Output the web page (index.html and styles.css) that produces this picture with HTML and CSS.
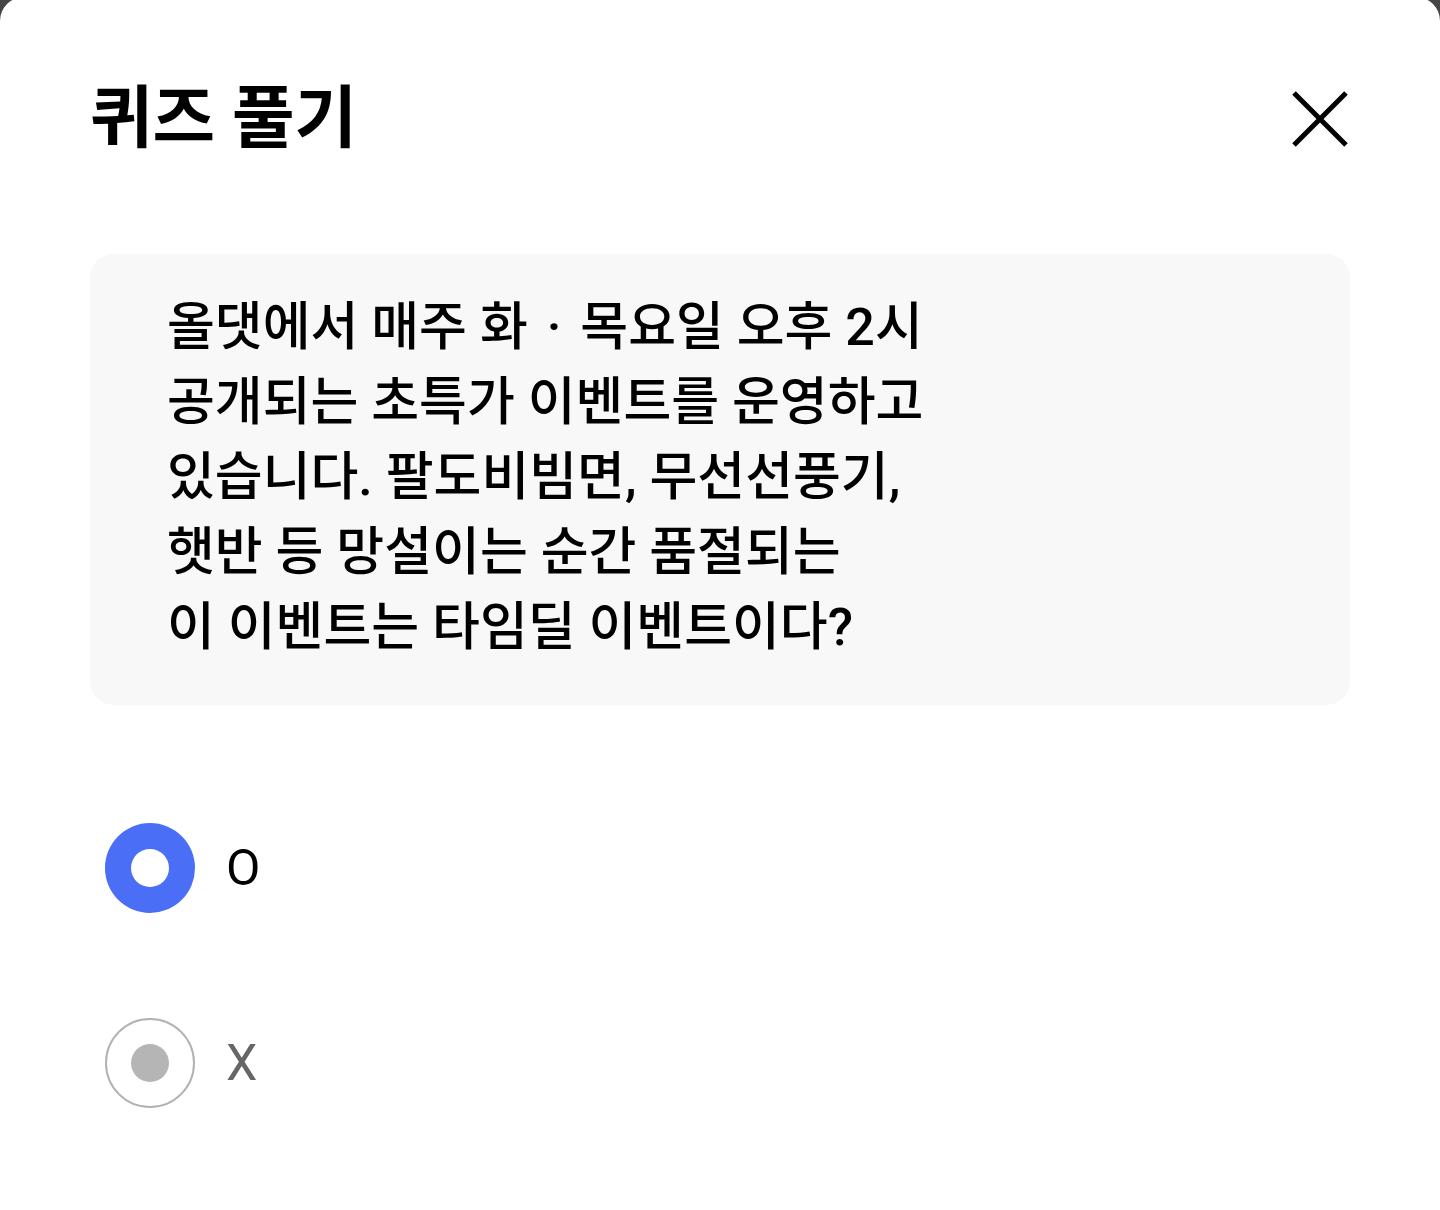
FILE: index.html
```html
<!DOCTYPE html>
<html lang="ko">
<head>
  <meta charset="UTF-8">
  <meta name="viewport" content="width=device-width, initial-scale=1.0">
  <title>퀴즈 풀기</title>
  <link rel="stylesheet" href="styles.css">
</head>
<body>

<div class="sheet">
  <div class="sheet-header">
    <h1>퀴즈 풀기</h1>
    <button class="btn-close" aria-label="닫기">
      <svg width="60" height="60" viewBox="0 0 60 60">
        <path d="M4 4 L56 56 M56 4 L4 56" stroke="#000" stroke-width="5" fill="none"/>
      </svg>
    </button>
  </div>

  <div class="question">
    올댓에서 매주 화 <span class="dot">·</span> 목요일 오후 2시<br>
    공개되는 초특가 이벤트를 운영하고<br>
    있습니다. 팔도비빔면, 무선선풍기,<br>
    햇반 등 망설이는 순간 품절되는<br>
    이 이벤트는 타임딜 이벤트이다?
  </div>

  <div class="options">
    <label class="option checked">
      <span class="radio"></span>
      <span class="option-label">O</span>
    </label>
    <label class="option">
      <span class="radio"></span>
      <span class="option-label">X</span>
    </label>
  </div>
</div>

</body>
</html>
```

FILE: styles.css
```css
body {
  margin: 0;
  background: #454545;
  font-family: Roboto, "Noto Sans CJK KR", sans-serif;
  height: 1210px;
  overflow: hidden;
}
.sheet {
  background: #fff;
  border-radius: 24px 24px 0 0;
  margin-top: -3px;
  height: 1213px;
  padding: 0 90px;
  box-sizing: border-box;
}
.sheet-header {
  display: flex;
  justify-content: space-between;
  align-items: center;
  padding-top: 76px;
  height: 92px;
}
.sheet-header h1 {
  margin: 0;
  font-size: 68px;
  font-weight: bold;
  color: #000;
  line-height: 92px;
}
.btn-close {
  border: 0;
  background: none;
  padding: 0;
  width: 60px;
  height: 60px;
  cursor: pointer;
}
.btn-close svg {
  display: block;
}
.question {
  margin-top: 89px;
  background: #f8f8f8;
  border-radius: 24px;
  padding: 36px 77px 40px;
  font-size: 52px;
  font-weight: 500;
  line-height: 75px;
  color: #000;
}
.question .dot {
  padding: 0 6px;
}
.options {
  display: flex;
  flex-direction: column;
  gap: 105px;
  margin-top: 118px;
  padding-left: 15px;
}
.option {
  display: flex;
  align-items: center;
  gap: 33px;
  cursor: pointer;
}
.radio {
  width: 90px;
  height: 90px;
  border-radius: 50%;
  box-sizing: border-box;
  border: 2px solid #b2b2b2;
  display: flex;
  align-items: center;
  justify-content: center;
}
.radio::after {
  content: "";
  width: 38px;
  height: 38px;
  border-radius: 50%;
  background: #b5b5b5;
}
.option.checked .radio {
  background: #4a6ef6;
  border: 0;
}
.option.checked .radio::after {
  background: #fff;
}
.option-label {
  font-size: 50px;
  color: #666;
  margin-left: -2px;
}
.option.checked .option-label {
  color: #000;
}
```
